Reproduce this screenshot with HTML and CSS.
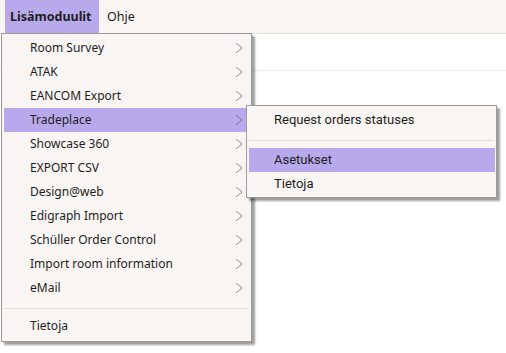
FILE: index.html
```html
<!DOCTYPE html>
<html>
<head>
    <title>Lisämoduulit</title>
    <link rel="stylesheet" href="styles.css">
</head>
<body>
    <div class="menubar">
        <div class="menubar-item active">Lisämoduulit</div>
        <div class="menubar-item">Ohje</div>
    </div>
    <div class="content">
        <div class="content-row"></div>
    </div>

    <div class="dropdown">
        <div class="menu-item">Room Survey<span class="chevron"></span></div>
        <div class="menu-item">ATAK<span class="chevron"></span></div>
        <div class="menu-item">EANCOM Export<span class="chevron"></span></div>
        <div class="menu-item selected">Tradeplace<span class="chevron"></span></div>
        <div class="menu-item">Showcase 360<span class="chevron"></span></div>
        <div class="menu-item">EXPORT CSV<span class="chevron"></span></div>
        <div class="menu-item">Design@web<span class="chevron"></span></div>
        <div class="menu-item">Edigraph Import<span class="chevron"></span></div>
        <div class="menu-item">Schüller Order Control<span class="chevron"></span></div>
        <div class="menu-item">Import room information<span class="chevron"></span></div>
        <div class="menu-item">eMail<span class="chevron"></span></div>
        <div class="separator"></div>
        <div class="menu-item">Tietoja</div>
    </div>

    <div class="submenu">
        <div class="submenu-item">Request orders statuses</div>
        <div class="separator"></div>
        <div class="submenu-item selected">Asetukset</div>
        <div class="submenu-item">Tietoja</div>
    </div>
</body>
</html>
```

FILE: styles.css
```css
body {
    margin: 0;
    background-color: #ffffff;
    font-family: "Noto Sans", Arial, sans-serif;
    font-size: 12px;
    color: #1e1e1e;
    position: relative;
    height: 353px;
    overflow: hidden;
}
.menubar {
    display: flex;
    height: 33px;
    padding-left: 5px;
    background-color: #f8f5f2;
    border-bottom: 1px solid #e8dfd7;
}
.menubar-item {
    display: flex;
    align-items: center;
    padding: 0 8px;
    font-size: 12.5px;
}
.menubar-item.active {
    background-color: #b8a9ec;
    font-weight: bold;
    padding: 0 8px 0 5px;
    width: 81px;
}
.content-row {
    height: 36px;
    border-bottom: 1px solid #ececec;
}
.dropdown {
    position: absolute;
    left: 1px;
    top: 33px;
    width: 249px;
    padding: 2px 0 3px 0;
    background-color: #f8f5f2;
    border: 1px solid #9a9a9a;
    box-shadow: 3px 3px 2px rgba(0,0,0,0.38);
}
.menu-item {
    position: relative;
    height: 24px;
    line-height: 24px;
    margin: 0 4px 0 2px;
    padding-left: 26px;
}
.menu-item.selected,
.submenu-item.selected {
    background-color: #b8a9ec;
}
.chevron {
    position: absolute;
    right: 5px;
    top: 7px;
    width: 6px;
    height: 10px;
    background:
        linear-gradient(to top right, transparent calc(50% - 0.6px), #6e6e6e 50%, transparent calc(50% + 0.6px)) top / 100% 50% no-repeat,
        linear-gradient(to bottom right, transparent calc(50% - 0.6px), #6e6e6e 50%, transparent calc(50% + 0.6px)) bottom / 100% 50% no-repeat;
}
.separator {
    height: 1px;
    margin: 8px 2px 5px 2px;
    background-color: #e6dbd5;
}
.submenu {
    position: absolute;
    left: 246px;
    top: 105px;
    width: 249px;
    padding: 2px 0 1px 0;
    background-color: #f8f5f2;
    border: 1px solid #9a9a9a;
    box-shadow: 3px 3px 2px rgba(0,0,0,0.38);
    font-family: Roboto, Arial, sans-serif;
    font-size: 13px;
}
.submenu .separator {
    margin: 8px 2px 7px 2px;
}
.submenu-item {
    height: 24px;
    line-height: 24px;
    margin: 0 1px 0 2px;
    padding-left: 25px;
}
```
